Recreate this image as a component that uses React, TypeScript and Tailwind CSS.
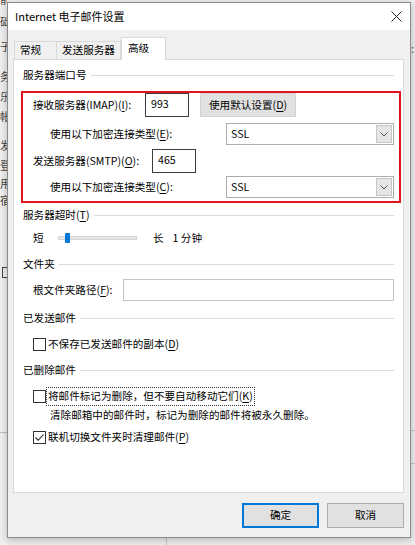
import React from 'react'

function U({ children }: { children: React.ReactNode }) {
  return <span className="underline underline-offset-2">{children}</span>
}

function GroupHead({ title }: { title: React.ReactNode }) {
  return (
    <div className="flex items-center h-4 pl-[9px] pr-[9px]">
      <span className="whitespace-nowrap">{title}</span>
      <div className="ml-[4px] flex-1 h-px bg-[#dcdcdc]" />
    </div>
  )
}

function Combo({ value }: { value: string }) {
  return (
    <div className="flex-1 h-[22px] border border-[#adadad] bg-white flex items-center pl-[4px] pr-[1px]">
      <span className="flex-1">{value}</span>
      <div className="w-[16px] h-[18px] bg-[#e5e5e5] border border-[#c6c6c6] flex items-center justify-center">
        <svg width="8" height="5" viewBox="0 0 8 5">
          <path d="M0.5 0.5 L4 4 L7.5 0.5" fill="none" stroke="#555" strokeWidth="1" />
        </svg>
      </div>
    </div>
  )
}

function Box({ checked }: { checked?: boolean }) {
  return (
    <div className="w-[13px] h-[13px] border border-[#333] bg-white flex items-center justify-center shrink-0">
      {checked && (
        <svg width="11" height="11" viewBox="0 0 11 11">
          <path d="M1.5 5.5 L4.2 8.3 L9.5 2.5" fill="none" stroke="#222" strokeWidth="1.1" />
        </svg>
      )}
    </div>
  )
}

const bgChars = [
  { t: '前', y: -6 },
  { t: '础', y: 16 },
  { t: '子', y: 41 },
  { t: '务', y: 71 },
  { t: '乐', y: 91 },
  { t: '帐', y: 111 },
  { t: '发', y: 140 },
  { t: '登', y: 160 },
  { t: '用', y: 178 },
  { t: '宿', y: 195 },
]

export default function App() {
  return (
    <div className="relative w-[415px] h-[545px] overflow-hidden bg-[#f0f0f0] text-[10.6px] leading-none text-black font-['Noto_Sans_CJK_SC',sans-serif]">
      {/* window behind */}
      <div className="absolute left-0 top-0 w-[7px] h-full overflow-hidden text-[#444]">
        {bgChars.map(c => (
          <span key={c.y} className="absolute right-[-4px] text-[11px]" style={{ top: c.y }}>
            {c.t}
          </span>
        ))}
        <div className="absolute top-[267px] right-[-6px] w-[11px] h-[11px] border border-[#444]" />
        <div className="absolute top-[432px] left-0 w-full h-px bg-[#bdbdbd]" />
      </div>
      <div className="absolute right-0 top-0 w-[5px] h-full overflow-hidden text-[#444]">
        <span className="absolute left-[1px] top-[43px] text-[11px]">:</span>
        <div className="absolute top-[430px] left-0 w-full h-px bg-[#c8c8c8]" />
        <div className="absolute top-[463px] left-0 w-full h-px bg-[#c8c8c8]" />
      </div>
      <div className="absolute left-[166px] top-[538px] w-px h-[8px] bg-[#c8c8c8]" />

      {/* dialog */}
      <div className="absolute left-[7px] top-[2px] w-[404px] h-[536px] border border-[#8c8c8c] bg-[#f0f0f0] flex flex-col shadow-[0_2px_8px_rgba(0,0,0,0.25)]">
        <div className="h-[27px] bg-white flex items-center pl-[7px] pr-[8px]">
          <span className="flex-1 text-[11px]">Internet 电子邮件设置</span>
          <svg width="11" height="11" viewBox="0 0 11 11">
            <path d="M0.5 0.5 L10.5 10.5 M10.5 0.5 L0.5 10.5" stroke="#222" strokeWidth="1" />
          </svg>
        </div>

        <div className="h-[29px] flex items-end pl-[6px]">
          <div className="w-[43px] h-[18px] border border-b-0 border-[#d9d9d9] bg-[#f0f0f0] flex items-center pl-[5px]">常规</div>
          <div className="w-[64px] h-[18px] border border-l-0 border-b-0 border-[#d9d9d9] bg-[#f0f0f0] flex items-center pl-[5px]">发送服务器</div>
          <div className="w-[45px] h-[23px] border border-b-0 border-[#d9d9d9] bg-white flex items-center pl-[6px] pb-[2px] mb-[-1px] relative z-10">高级</div>
        </div>

        <div className="ml-[5px] w-[391px] h-[434px] border border-[#d9d9d9] bg-white flex flex-col pt-[7px]">
          <GroupHead title="服务器端口号" />

          <div className="mt-[8px] ml-[7px] mr-[2px] border-2 border-[#e0141e] flex flex-col pl-[10px] pr-[5px] pb-[3px]">
            <div className="flex items-center h-[24px]">
              <span className="w-[112px] whitespace-nowrap">接收服务器(IMAP)(<U>I</U>):</span>
              <div className="w-[44px] h-[24px] border border-[#3c3c3c] flex items-center pl-[5px] pb-[2px]">993</div>
              <div className="ml-[11px] w-[96px] h-[24px] bg-[#e1e1e1] border border-[#d4d4d4] flex items-center justify-center">
                使用默认设置(<U>D</U>)
              </div>
            </div>
            <div className="flex items-center h-[22px] mt-[6px]">
              <span className="w-[193px] pl-[17px] whitespace-nowrap">使用以下加密连接类型(<U>E</U>):</span>
              <Combo value="SSL" />
            </div>
            <div className="flex items-center h-[24px] mt-[4px]">
              <span className="w-[119px] whitespace-nowrap">发送服务器(SMTP)(<U>O</U>):</span>
              <div className="w-[44px] h-[24px] border border-[#3c3c3c] flex items-center pl-[5px] pb-[2px]">465</div>
            </div>
            <div className="flex items-center h-[22px] mt-[3px]">
              <span className="w-[193px] pl-[17px] whitespace-nowrap">使用以下加密连接类型(<U>C</U>):</span>
              <Combo value="SSL" />
            </div>
          </div>

          <div className="mt-[4px]">
            <GroupHead title={<>服务器超时(<U>T</U>)</>} />
          </div>
          <div className="mt-[7px] h-4 flex items-center pl-[19px]">
            <span className="w-[25px]">短</span>
            <div className="relative w-[79px] h-[4px] bg-[#e7e7e7] border border-[#d6d6d6]">
              <div className="absolute left-[6px] top-[-4px] w-[5px] h-[10px] rounded-[1px] bg-[#0078d7]" />
            </div>
            <span className="ml-[16px]">长</span>
            <span className="ml-[9px]">1 分钟</span>
          </div>

          <div className="mt-[10px]">
            <GroupHead title="文件夹" />
          </div>
          <div className="mt-[7px] flex items-center h-[22px] pl-[19px] pr-[9px]">
            <span className="w-[90px] whitespace-nowrap">根文件夹路径(<U>F</U>):</span>
            <div className="flex-1 h-[22px] border border-[#c4c4c4] bg-white" />
          </div>

          <div className="mt-[9px]">
            <GroupHead title="已发送邮件" />
          </div>
          <div className="mt-[10px] h-4 flex items-center pl-[19px]">
            <Box />
            <span className="ml-[2px]">不保存已发送邮件的副本(<U>D</U>)</span>
          </div>

          <div className="mt-[10px]">
            <GroupHead title="已删除邮件" />
          </div>
          <div className="mt-[8px] h-[20px] flex items-center pl-[19px]">
            <Box />
            <span className="border border-dotted border-[#333] h-[19px] flex items-center px-px">
              将邮件标记为删除，但不要自动移动它们(<U>K</U>)
            </span>
          </div>
          <div className="mt-px h-4 flex items-center pl-[36px]">
            清除邮箱中的邮件时，标记为删除的邮件将被永久删除。
          </div>
          <div className="mt-[6px] h-4 flex items-center pl-[19px]">
            <Box checked />
            <span className="ml-[2px]">联机切换文件夹时清理邮件(<U>P</U>)</span>
          </div>
        </div>

        <div className="mt-[10px] flex justify-end gap-[8px] pr-[6px]">
          <button className="w-[77px] h-[25px] bg-[#e1e1e1] border-2 border-[#0078d7] flex items-center justify-center">确定</button>
          <button className="w-[77px] h-[25px] bg-[#e1e1e1] border border-[#adadad] flex items-center justify-center">取消</button>
        </div>
      </div>
    </div>
  )
}
